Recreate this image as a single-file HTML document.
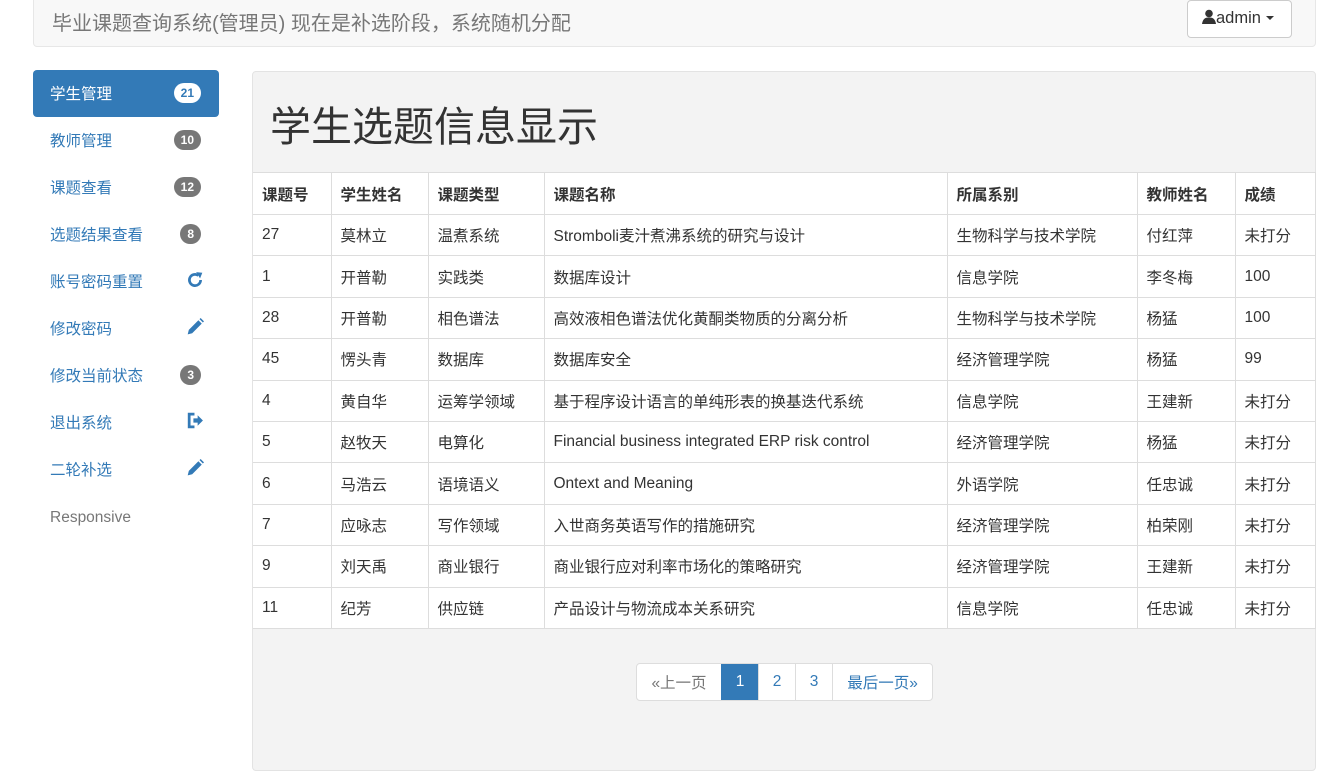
<!DOCTYPE html>
<html><head><meta charset="utf-8"><style>
*{box-sizing:border-box}
body{margin:0;width:1343px;height:727px;overflow:hidden;background:#fff;font-family:"Liberation Sans","Noto Sans CJK SC",sans-serif;font-size:15.5px;color:#333}
.nav{position:absolute;left:33px;top:-5px;width:1283px;height:52px;background:#f8f8f8;border:1px solid #e7e7e7;border-radius:4px}
.brand{position:absolute;left:18px;top:11px;font-size:20px;color:#777}
.btn{position:absolute;left:1153px;top:4px;width:105px;height:38px;background:#fff;border:1px solid #ccc;border-radius:4px;font-size:16.5px;color:#333;padding:8px 0 0 14px}
.side{position:absolute;left:33px;top:70px;width:186px}
.item{height:47px;position:relative;color:#337ab7;font-size:15.5px;padding:12px 0 0 17px}
.item.act{background:#337ab7;color:#fff;border-radius:4px}
.badge{position:absolute;right:18px;top:13px;background:#777;color:#fff;font-size:12px;font-weight:bold;border-radius:10px;padding:4px 7px;line-height:12px}
.act .badge{background:#fff;color:#337ab7}
.ic{position:absolute;right:15px;top:13px}
.panel{position:absolute;left:252px;top:71px;width:1064px;height:700px;background:#f3f3f3;border:1px solid #e3e3e3;border-radius:4px}
h1{position:absolute;left:17px;top:30px;margin:0;font-weight:normal;font-size:41px;line-height:50px;color:#333}
table{position:absolute;left:0;top:100px;width:1063px;border-collapse:collapse;background:#fff}
td,th{border:1px solid #ddd;padding:0 9px;height:41.4px;text-align:left;font-size:15.5px}
th{height:42px;font-weight:bold}
tr>*:first-child{border-left:none}
.pg{position:absolute;left:383px;top:591px;display:flex;border:1px solid #ddd;border-radius:4px;background:#fff;height:38px}
.pg span{display:flex;align-items:center;justify-content:center;color:#337ab7;border-left:1px solid #ddd;font-size:15.5px;width:37px}
.pg span:first-child{border-left:none;color:#777;width:84px}
.pg span:last-child{width:100px}
.pg .on{background:#337ab7;color:#fff;border-color:#337ab7}
</style></head><body>
<div class="nav"><div class="brand">毕业课题查询系统(管理员) 现在是补选阶段，系统随机分配</div>
<div class="btn"><svg width="14" height="15" viewBox="0 0 14 15" style="vertical-align:-1px"><circle cx="7" cy="4.5" r="3.8" fill="#333"/><path d="M0 15 Q1 8 7 8.5 Q13 8 14 15Z" fill="#333"/></svg>admin <span style="display:inline-block;border-left:4px solid transparent;border-right:4px solid transparent;border-top:4px solid #333;vertical-align:3px"></span></div></div>
<div class="side">
<div class="item act">学生管理<span class="badge">21</span></div>
<div class="item">教师管理<span class="badge">10</span></div>
<div class="item">课题查看<span class="badge">12</span></div>
<div class="item">选题结果查看<span class="badge">8</span></div>
<div class="item">账号密码重置<svg class="ic" width="18" height="18" viewBox="0 0 16 16"><path d="M13 8A5 5 0 1 1 11 4" fill="none" stroke="#337ab7" stroke-width="2.4"/><path d="M9 1L14.5 1.5 12.5 6.5Z" fill="#337ab7"/></svg></div>
<div class="item">修改密码<svg class="ic" width="18" height="18" viewBox="0 0 16 16"><path d="M1.5 14.5L2.5 10.5 11 2 14 5 5.5 13.5Z M12 1 L13 0 16 3 15 4Z" fill="#337ab7"/></svg></div>
<div class="item">修改当前状态<span class="badge">3</span></div>
<div class="item">退出系统<svg class="ic" width="18" height="17" viewBox="0 0 17 16"><path d="M8 2H3V14H8" fill="none" stroke="#337ab7" stroke-width="2.6"/><path d="M7 6H11V3L16 8 11 13V10H7Z" fill="#337ab7"/></svg></div>
<div class="item">二轮补选<svg class="ic" width="18" height="18" viewBox="0 0 16 16"><path d="M1.5 14.5L2.5 10.5 11 2 14 5 5.5 13.5Z M12 1 L13 0 16 3 15 4Z" fill="#337ab7"/></svg></div>
<div class="item" style="color:#777;padding-top:16px">Responsive</div>
</div>
<div class="panel"><h1>学生选题信息显示</h1>
<table>
<tr><th style="width:78px">课题号</th><th style="width:97px">学生姓名</th><th style="width:116px">课题类型</th><th style="width:403px">课题名称</th><th style="width:190px">所属系别</th><th style="width:98px">教师姓名</th><th>成绩</th></tr>
<tr><td>27</td><td>莫林立</td><td>温煮系统</td><td>Stromboli麦汁煮沸系统的研究与设计</td><td>生物科学与技术学院</td><td>付红萍</td><td>未打分</td></tr>
<tr><td>1</td><td>开普勒</td><td>实践类</td><td>数据库设计</td><td>信息学院</td><td>李冬梅</td><td>100</td></tr>
<tr><td>28</td><td>开普勒</td><td>相色谱法</td><td>高效液相色谱法优化黄酮类物质的分离分析</td><td>生物科学与技术学院</td><td>杨猛</td><td>100</td></tr>
<tr><td>45</td><td>愣头青</td><td>数据库</td><td>数据库安全</td><td>经济管理学院</td><td>杨猛</td><td>99</td></tr>
<tr><td>4</td><td>黄自华</td><td>运筹学领域</td><td>基于程序设计语言的单纯形表的换基迭代系统</td><td>信息学院</td><td>王建新</td><td>未打分</td></tr>
<tr><td>5</td><td>赵牧天</td><td>电算化</td><td>Financial business integrated ERP risk control</td><td>经济管理学院</td><td>杨猛</td><td>未打分</td></tr>
<tr><td>6</td><td>马浩云</td><td>语境语义</td><td>Ontext and Meaning</td><td>外语学院</td><td>任忠诚</td><td>未打分</td></tr>
<tr><td>7</td><td>应咏志</td><td>写作领域</td><td>入世商务英语写作的措施研究</td><td>经济管理学院</td><td>柏荣刚</td><td>未打分</td></tr>
<tr><td>9</td><td>刘天禹</td><td>商业银行</td><td>商业银行应对利率市场化的策略研究</td><td>经济管理学院</td><td>王建新</td><td>未打分</td></tr>
<tr><td>11</td><td>纪芳</td><td>供应链</td><td>产品设计与物流成本关系研究</td><td>信息学院</td><td>任忠诚</td><td>未打分</td></tr>
</table>
<div class="pg"><span>«上一页</span><span class="on">1</span><span>2</span><span>3</span><span>最后一页»</span></div>
</div>
</body></html>
